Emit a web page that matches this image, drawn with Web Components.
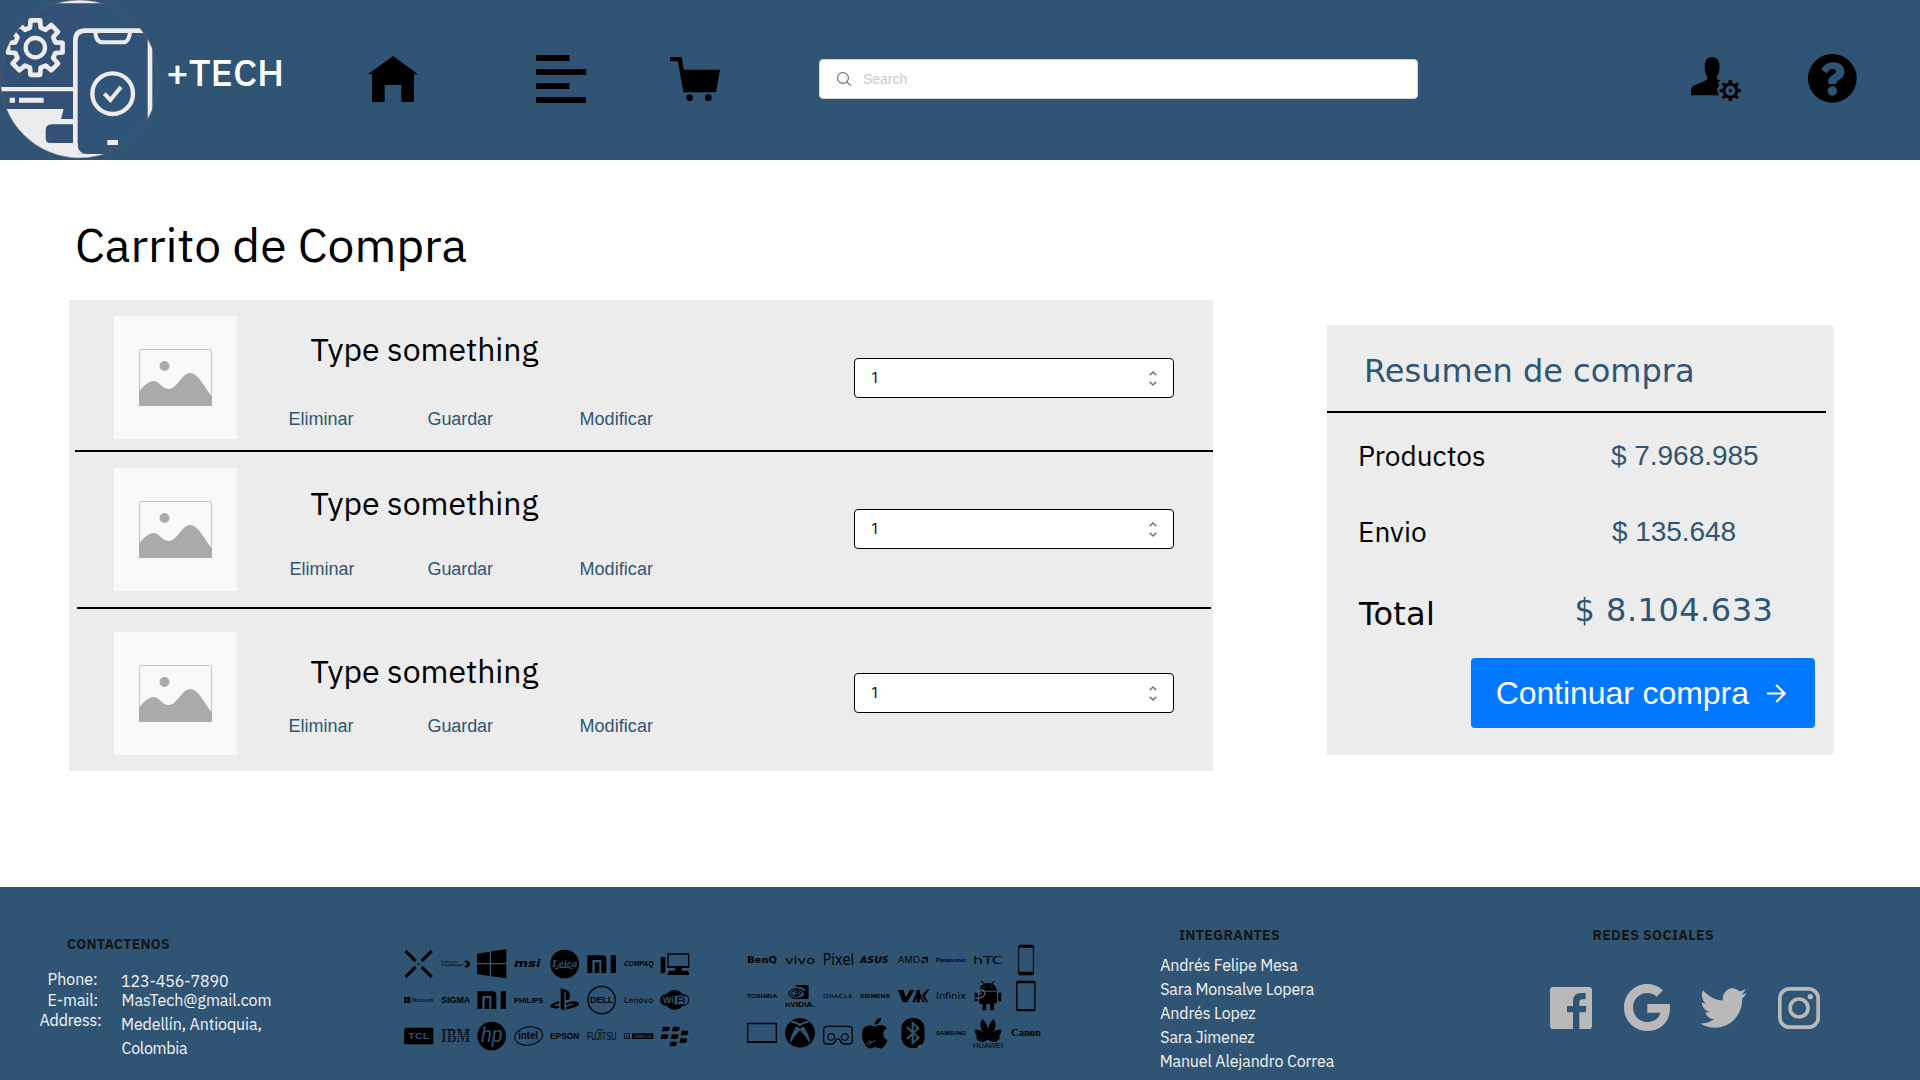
<!DOCTYPE html>
<html lang="es">
<head>
<meta charset="utf-8">
<title>+TECH - Carrito de Compra</title>
<style>
html,body{margin:0;padding:0;background:#fff}
body{width:1920px;height:1080px;overflow:hidden}
</style>
</head>
<body>
<shop-page></shop-page>
<script>
const PLEX = '"IBM Plex Sans","Noto Sans",sans-serif';
const FONTS = { plex: PLEX, arial: '"Liberation Sans",Arial,sans-serif', verdana: 'Verdana,"DejaVu Sans",sans-serif', inter: 'Inter,sans-serif' };
const ctx = document.createElement('canvas').getContext('2d');

/* One line of text whose box ends on the baseline and whose ink fills the width "w". */
class FitText extends HTMLElement {
  connectedCallback() {
    const g = (n, d) => this.getAttribute(n) || d;
    const size = +g('size', 16), w = +g('w', 0), font = FONTS[g('font', 'plex')], weight = g('weight', '400');
    const text = this.textContent;
    ctx.font = `${weight} ${size}px ${font}`;
    const m = ctx.measureText(text);
    const ink = m.actualBoundingBoxRight + m.actualBoundingBoxLeft;
    const ls = w && text.length > 1 ? (w - ink) / (text.length - 1) : 0;
    const root = this.attachShadow({ mode: 'open' });
    root.innerHTML = `<style>
      :host{display:block;flex:none;width:${w || Math.ceil(ink)}px;height:${size}px;line-height:0;white-space:nowrap;
        font:${weight} ${size}px/0 ${font};color:${g('color', '#000')}}
      i{display:inline-block;width:0;height:${size}px}
      span{margin-left:${m.actualBoundingBoxLeft}px;letter-spacing:${ls}px}
    </style><i></i><span><slot></slot></span>`;
  }
}

const ICONS = {
  home: ['0 0 150 138', '<path d="M75 0 150 55H138V138H100V87H50V138H12V55H0Z"/>'],
  menu: ['0 0 150 144', '<path d="M0 0H100V18H0ZM0 42H150V60H0ZM0 84H100V102H0ZM0 126H150V144H0Z"/>'],
  cart: ['0 0 150 132', '<path d="M0 0H35L41 38H150L138 106H40L24 13H0Z"/><circle cx="59" cy="122" r="10"/><circle cx="115" cy="122" r="10"/>'],
  user: ['0 0 150 132', '<path d="M0 115V98Q1 90 10 85L41 72Q50 68 50 62Q41 48 41 28C41 9 50 0 63 0S86 9 86 28Q86 48 77 60Q77 66 81 68L89 71 80 77 85 85 78 96 84 115Z"/><g transform="translate(118 101)"><path d="M-5-32H5V-24L13-20 19-26 26-19 20-13 24-5H32V5H24L20 13 26 19 19 26 13 20 5 24V32H-5V24L-13 20-19 26-26 19-20 13-24 5H-32V-5H-24L-20-13-26-19-19-26-13-20-5-24Z"/><circle r="15" fill="#305574"/><circle r="5"/></g>'],
  help: ['0 0 146 146', '<circle cx="73" cy="73" r="73"/><path d="M40 47C47 34 58 25 76 25C96 25 109 36 109 53C109 68 100 73 93 78C86 82 86 84 86 90H61V82C61 70 69 66 75 62C81 58 84 57 84 52C84 47 80 45 74 45C66 45 63 50 56 58Z" fill="#305574"/><circle cx="73" cy="111" r="14" fill="#305574"/>'],
  search: ['0 0 14 14', '<g fill="none" stroke="#6b7075" stroke-width="1.15"><ellipse cx="6" cy="6" rx="5.4" ry="5.4"/><path d="M9.8 9.8 13.7 13.7"/></g>'],
  spin: ['0 0 8 15', '<path d="M.7 4.2 4 1 7.3 4.2M.7 10.8 4 14 7.3 10.8" fill="none" stroke="#686c70" stroke-width="1.4"/>'],
  arrow: ['0 0 19 19', '<path d="M0 9.5H17.5M9.2 1 17.7 9.5 9.2 18" fill="none" stroke="#fff" stroke-width="2.2"/>'],
  picture: ['0 0 73 57', '<rect x=".5" y=".5" width="72" height="56" rx="1" fill="none" stroke="#c4c4c4"/><ellipse cx="25.5" cy="17" rx="5" ry="5"/><path d="M0 43C5 36 10 32 15 32C20 32 23 40 30 40C38 40 43 24 51 24C58 24 62 32 73 48V57H0Z"/>'],
  facebook: ['0 0 126 126', '<path fill-rule="evenodd" d="M10 0H116Q126 0 126 10V116Q126 126 116 126H88V76H107L109 57H88V46Q88 37 98 37H107V18H94Q69 18 69 43V57H51V76H69V126H10Q0 126 0 116V10Q0 0 10 0Z"/>'],
  google: ['0 0 138 141', '<path d="M70 60H137Q138 66 138 72C138 113 110 141 70 141C31 141 0 110 0 70.500C0 31 31 0 70 0C89 0 104 7 117 19L98 38Q87 27 70 27C46 27 27 46 27 70.500C27 95 46 114 70 114C92 114 106 102 109 86H70Z"/>'],
  twitter: ['0 2.100 24 19.800', '<path d="M23.953 4.570a10 10 0 01-2.825.775 4.958 4.958 0 002.163-2.723c-.951.555-2.005.959-3.127 1.184a4.920 4.920 0 00-8.384 4.482C7.690 8.095 4.067 6.130 1.640 3.162a4.822 4.822 0 00-.666 2.475c0 1.710.870 3.213 2.188 4.096a4.904 4.904 0 01-2.228-.616v.060a4.923 4.923 0 003.946 4.827 4.996 4.996 0 01-2.212.085 4.936 4.936 0 004.604 3.417 9.867 9.867 0 01-6.102 2.105c-.390 0-.779-.023-1.170-.067a13.995 13.995 0 007.557 2.209c9.053 0 13.998-7.496 13.998-13.985 0-.210 0-.420-.015-.630A9.935 9.935 0 0024 4.590z"/>'],
  instagram: ['0 0 126 126', '<g fill="none" stroke="#b9b9b9"><rect x="5.500" y="5.500" width="115" height="115" rx="29" stroke-width="11"/><circle cx="63" cy="63" r="27" stroke-width="11"/></g><circle cx="97" cy="29" r="8"/>']
};
class UiIcon extends HTMLElement {
  connectedCallback() {
    const [vb, body] = ICONS[this.getAttribute('name')];
    this.attachShadow({ mode: 'open' }).innerHTML = `<style>:host{display:block;flex:none;fill:currentColor}svg{display:block;width:100%;height:100%}</style>
      <svg viewBox="${vb}" preserveAspectRatio="none">${body}</svg>`;
  }
}

class TechLogo extends HTMLElement {
  connectedCallback() {
    let gear = '';
    for (let i = 0; i < 8; i++) {
      const p = (r, a) => { const t = (i * 45 + a) * Math.PI / 180; return `${(106 + r * Math.sin(t)).toFixed(1)} ${(143 - r * Math.cos(t)).toFixed(1)}`; };
      gear += `${i ? 'L' : 'M'}${p(62, -15)}L${p(83, -10)}L${p(83, 10)}L${p(62, 15)}`;
    }
    this.attachShadow({ mode: 'open' }).innerHTML = `<style>:host{display:block;flex:none;width:159px;height:158px}svg{display:block}</style>
    <svg width="159" height="158" viewBox="0 0 477 474">
      <defs><clipPath id="c"><ellipse cx="238.500" cy="237" rx="237" ry="237"/></clipPath></defs>
      <g clip-path="url(#c)">
        <path fill="#335076" d="M0 0H477V474H0Z"/>
        <path fill="#305478" d="M240 102H440V460H240Z"/><path fill="#305476" d="M250 12H477V84H250Z"/>
        <path fill="#305574" d="M457 84H477V474H457Z"/>
        <path fill="#ececee" d="M0 0H477V10H0ZM0 261H225V274H0ZM29 293H45V308H29ZM57 293H131V308H57ZM0 327H191L183 357H225V373H155Q137 373 137 392V415Q137 429 150 429H225V474H0ZM225 462H477V474H225ZM322 420H354V435H322Z"/>
        <path d="M226 474V122Q226 92 256 92H430Q450 92 450 115V474" fill="none" stroke="#ececee" stroke-width="14"/>
        <path d="M233 430Q233 461 258 461H225V430Z" fill="#ececee"/>
        <path d="M286 92Q286 127 309 127H371Q386 127 391 92" fill="none" stroke="#ececee" stroke-width="12"/>
        <circle cx="338" cy="281" r="61" fill="none" stroke="#ececee" stroke-width="13"/>
        <path d="M313 281 331 300 363 261" fill="none" stroke="#ececee" stroke-width="12"/>
        <path d="${gear}Z" fill="none" stroke="#ececee" stroke-width="14" stroke-linejoin="round"/>
        <circle cx="106" cy="143" r="29" fill="none" stroke="#ececee" stroke-width="13"/>
      </g>
      <circle cx="238.500" cy="237" r="236.500" fill="none" stroke="#7d5968" stroke-width="1.200"/>
    </svg>`;
  }
}

class SiteHeader extends HTMLElement {
  connectedCallback() {
    this.attachShadow({ mode: 'open' }).innerHTML = `<style>
      :host{display:flex;align-items:flex-start;height:160px;background:#305574;color:#000;box-sizing:border-box}
      .box{flex:none;display:flex;box-sizing:border-box;width:599px;height:40px;margin:59px 0 0 99px;padding-left:17px;background:#fff;border:1px solid #cdd3d7;border-radius:4px}
    </style>
    <tech-logo></tech-logo>
    <fit-text size="38" weight="500" color="#fff" w="113" style="margin:48px 0 0 9px">+TECH</fit-text>
    <ui-icon name="home" style="width:50px;height:46px;margin:56px 0 0 87px"></ui-icon>
    <ui-icon name="menu" style="width:50px;height:48px;margin:55px 0 0 118px"></ui-icon>
    <ui-icon name="cart" style="width:50px;height:44px;margin:57px 0 0 84px"></ui-icon>
    <div class="box">
      <ui-icon name="search" style="width:14px;height:14px;margin-top:12px"></ui-icon>
      <fit-text font="arial" size="14" w="43.500" color="#c4cbcd" style="margin:10px 0 0 12px">Search</fit-text>
    </div>
    <ui-icon name="user" style="width:50px;height:44px;margin:57px 0 0 273px"></ui-icon>
    <ui-icon name="help" style="width:48.700px;height:48.700px;margin:54.300px 0 0 67px"></ui-icon>`;
  }
}

class QtyField extends HTMLElement {
  connectedCallback() {
    this.attachShadow({ mode: 'open' }).innerHTML = `<style>
      :host{display:flex;flex:none;justify-content:space-between;box-sizing:border-box;width:320px;height:40px;background:#fff;border:1px solid #000;border-radius:4px;padding:0 16px 0 16.500px}
    </style><fit-text font="inter" size="15" color="#161616" style="margin-top:9px">1</fit-text>
    <ui-icon name="spin" style="width:8px;height:15px;margin-top:12px"></ui-icon>`;
  }
}

/* Attributes: head, link and qty give the space above each part, indent the start of the links. */
class CartItem extends HTMLElement {
  connectedCallback() {
    const g = n => this.getAttribute(n);
    this.attachShadow({ mode: 'open' }).innerHTML = `<style>
      :host{display:flex;align-items:flex-start;box-sizing:border-box}
      .pic{flex:none;display:flex;justify-content:center;box-sizing:border-box;width:123px;height:123px;padding-top:33px;margin-left:45px;background:#f9f9f9;color:#aaa}
      .info{flex:none;width:617px}
      .links{display:flex;margin:${g('link')}px 0 0 ${g('indent')}px}
    </style>
    <div class="pic"><ui-icon name="picture" style="width:73px;height:57px"></ui-icon></div>
    <div class="info">
      <fit-text size="32" w="228" style="margin:${g('head')}px 0 0 73.500px">Type something</fit-text>
      <div class="links">
        <fit-text font="arial" size="18" w="64" color="#305574">Eliminar</fit-text>
        <fit-text font="arial" size="18" w="65.500" color="#305574" style="margin-left:${126.5 - g('indent')}px">Guardar</fit-text>
        <fit-text font="arial" size="18" w="72.500" color="#305574" style="margin-left:87.500px">Modificar</fit-text>
      </div>
    </div>
    <qty-field style="margin-top:${g('qty')}px"></qty-field>`;
  }
}

class CartList extends HTMLElement {
  connectedCallback() {
    this.attachShadow({ mode: 'open' }).innerHTML = `<style>
      :host{display:flex;flex-direction:column;flex:none;box-sizing:border-box;width:1144px;height:471px;background:#ececec;margin-top:38px}
      cart-item{flex:none}
      hr{flex:none;border:0;margin:0;height:2px;background:#000}
    </style>
    <cart-item style="height:150px;padding-top:16px" head="13" link="46" indent="52.500" qty="42"></cart-item>
    <hr style="margin-left:6px">
    <cart-item style="height:155px;padding-top:16px" head="15" link="42" indent="53.500" qty="41"></cart-item>
    <hr style="margin:0 2px 0 8px">
    <cart-item style="height:162px;padding-top:23px" head="19" link="31" indent="52.500" qty="41"></cart-item>`;
  }
}

class OrderSummary extends HTMLElement {
  connectedCallback() {
    this.attachShadow({ mode: 'open' }).innerHTML = `<style>
      :host{display:flex;flex-direction:column;flex:none;box-sizing:border-box;width:507px;height:430px;background:#ececec}
      hr{flex:none;border:0;margin:29px 8px 0 0;height:2px;background:#000}
      .row{display:flex;align-items:flex-start;padding-left:33px}
      button{flex:none;display:flex;box-sizing:border-box;width:344px;height:70px;margin:33px 0 0 144px;padding:0 0 0 25.500px;border:0;border-radius:4px;background:#0078ff}
    </style>
    <fit-text font="verdana" size="32" w="325" color="#305574" style="margin:25px 0 0 40px">Resumen de compra</fit-text>
    <hr>
    <div class="row" style="padding-top:24px">
      <fit-text size="28" w="125" style="margin-top:1px">Productos</fit-text>
      <fit-text font="arial" size="28" w="147" color="#305574" style="margin-left:126px">$ 7.968.985</fit-text>
    </div>
    <div class="row" style="padding-top:47px">
      <fit-text size="28" w="66" style="margin-top:1px">Envio</fit-text>
      <fit-text font="arial" size="28" w="123.500" color="#305574" style="margin-left:186px">$ 135.648</fit-text>
    </div>
    <div class="row" style="padding-top:47px;padding-left:31px">
      <fit-text font="verdana" size="32" w="74" style="margin-top:4px">Total</fit-text>
      <fit-text font="verdana" size="32" w="194" color="#305574" style="margin-left:144.500px">$ 8.104.633</fit-text>
    </div>
    <button>
      <fit-text font="arial" size="32" w="252.500" color="#fff" style="margin-top:14px">Continuar compra</fit-text>
      <ui-icon name="arrow" style="width:19px;height:19px;margin:25.500px 0 0 17.500px"></ui-icon>
    </button>`;
  }
}

/* Brand marks: drawn on an 88 x 96 field, centred at (44,48). */
const word = (t, size, y, o = {}) => `<text x="${o.x ?? 0}" y="${y}" font-size="${size}" font-family="${o.f || 'Liberation Sans'}" font-weight="${o.b || 700}" ${o.i ? 'font-style="italic"' : ''} fill="${o.c || '#000'}" textLength="${o.w || 88}" lengthAdjust="spacingAndGlyphs">${t}</text>`;
const B = '#305574';
const mi = '<path d="M1 22H47Q58 22 58 34V75H43V36H16V75H1ZM23 43H37V75H23ZM71 22H87V75H71Z"/>';
const blackberry = [[6,20],[36,20],[2,43],[32,43],[62,32],[58,55],[28,65]].map(([x, y]) => `<path d="M${x + 3} ${y}H${x + 18}Q${x + 25} ${y} ${x + 23} ${y + 7}Q${x + 21} ${y + 14} ${x + 14} ${y + 14}H${x}Z"/>`).join('');
const petals = [[-82, 36], [-56, 49], [-18, 64], [18, 64], [56, 49], [82, 36]].map(([a, h]) => `<path transform="translate(44 68) rotate(${a})" d="M0 0C-12-${h * .35}-14-${h * .8} ${a < 0 ? 3 : -3}-${h}C14-${h * .8} 12-${h * .35} 0 0Z"/>`).join('');
const SET_A = [
  '<path d="M8 5 38 36 31 42 1 12ZM80 5 50 36 57 42 87 12ZM8 91 38 60 31 54 1 84ZM80 91 50 60 57 54 87 84Z"/><path d="M39 47H49V50H39Z"/>',
  word('Qualcomm', 11, 46, { w: 50, b: 400 }) + word('snapdragon', 12, 55, { w: 68, b: 400 }) + '<path d="M68 41Q72 37 79 38Q87 41 87 48Q86 59 75 59Q71 58 70 55Q78 52 78 46Q75 41 68 41Z"/>',
  '<path d="M0 17 38 11V45H0ZM42 10 88 4V45H42ZM0 49H38V84L0 79ZM42 49H88V91L42 85Z"/>',
  word('msi', 34, 57, { i: 1, w: 80, f: 'DejaVu Sans' }),
  '<circle cx="44" cy="48" r="43"/>' + word('Leica', 34, 56, { i: 1, w: 76, x: 6, f: 'Liberation Serif', c: B }) + `<path d="M15 62Q45 54 68 62" fill="none" stroke="${B}" stroke-width="3"/>`,
  mi,
  word('COMPAQ', 20, 54, { i: 1 }),
  '<rect x="2" y="27" width="14" height="49" rx="3"/><path fill-rule="evenodd" d="M22 16H88V60H22ZM26 20V54H84V20Z"/><path d="M45 60H65V68H84L88 81H22L27 68H45Z"/>',
  '<path d="M0 39H8V47H0ZM10 39H19V47H10ZM0 49H8V57H0ZM10 49H19V57H10Z"/>' + word('Microsoft', 15, 53, { x: 23, w: 65, b: 400 }),
  word('SIGMA', 26, 57),
  mi,
  word('PHILIPS', 23, 56),
  '<path d="M32 13 50 18Q60 22 60 36Q60 52 47 47V24L43 23V80L32 75ZM27 51V59L12 64Q14 68 27 65V72Q8 76 1 68Q0 61 12 56ZM48 57 66 52Q84 51 87 59Q87 65 78 68L48 77V69L72 61Q70 58 62 60L48 64Z"/>',
  '<circle cx="44" cy="48" r="41" fill="none" stroke="#000" stroke-width="4"/>' + word('DELL', 28, 58, { x: 9, w: 70 }),
  word('Lenovo', 24, 57, { b: 400, f: 'DejaVu Sans' }),
  '<ellipse cx="44" cy="48" rx="30" ry="30"/><rect x="0" y="31" width="88" height="34" rx="17"/>' + word('Wi', 27, 58, { x: 9, w: 32, c: B }) + `<path d="M45 35H73Q84 35 84 47Q84 61 72 61H43Z" fill="${B}"/>` + word('Fi', 27, 57, { x: 50, w: 26 }),
  '<path d="M5 23H88V73H0V32Z"/>' + word('TCL', 25, 57, { x: 13, w: 63, c: B }),
  word('IBM', 54, 66, { f: 'Liberation Serif' }) + `<path d="M0 35.500H88M0 41H88M0 46.500H88M0 52H88M0 57.500H88M0 63H88" stroke="${B}" stroke-width="2"/>`,
  '<circle cx="44" cy="48" r="43"/>' + word('hp', 68, 65, { x: 12, w: 64, i: 1, b: 400, c: B }),
  '<ellipse cx="44" cy="48" rx="42" ry="27" fill="none" stroke="#000" stroke-width="3" transform="rotate(-8 44 48)"/>' + word('intel', 32, 57, { x: 13, w: 59 }),
  word('EPSON', 26, 57),
  word('FUJITSU', 34, 61, { b: 400 }) + '<path d="M31 36C29 28 36 25 39 31C42 26 48 29 45 35" fill="none" stroke="#000" stroke-width="2"/>',
  '<path fill-rule="evenodd" d="M0 40H18V57H0ZM2 42V55H16V42Z"/><path d="M24 40H88V57H24Z"/>' + word('R', 13, 54, { x: 5, w: 8, b: 400 }) + word('ONEPLUS', 12, 53, { x: 29, w: 54, c: B }),
  blackberry
];
const SET_B = [
  word('BenQ', 28, 57, { f: 'DejaVu Sans' }),
  word('vivo', 32, 59, { b: 400, f: 'DejaVu Sans' }),
  word('Pixel', 47, 64, { b: 400, x: -1, w: 92, f: 'Open Sans' }),
  word('ASUS', 24, 56, { i: 1, w: 84, f: 'DejaVu Sans' }),
  word('AMD', 28, 57, { w: 65, b: 400, f: 'Open Sans' }) + '<path d="M69 39H88V58L82 52V45H75ZM69 47V58H80L76 52H74Z"/>',
  word('Panasonic', 17, 53),
  word('hTC', 34, 60, { b: 400, f: 'DejaVu Sans' }),
  '<path fill-rule="evenodd" d="M26 2H62Q67 2 67 7V89Q67 94 62 94H26Q21 94 21 89V7Q21 2 26 2ZM24 11V83H64V11Z"/>',
  word('TOSHIBA', 18, 54),
  '<path d="M31 15H69V57H31V53Q49 54 57 43Q46 27 31 29V25Q46 23 54 34L60 31Q50 18 31 20Z"/><path d="M31 25C19 28 10 37 10 40Q17 55 31 56M31 31Q22 34 18 39Q23 50 31 50Q43 47 48 40Q40 31 31 31ZM31 37Q36 34 40 40Q37 46 31 46Z" fill="none" stroke="#000" stroke-width="3"/>' + word('nVIDIA.', 22, 81),
  word('ORACLE', 16, 54, { b: 400, f: 'DejaVu Sans' }),
  word('SIEMENS', 18, 54),
  '<path d="M0 30H16L23 52 35 30H48L27 67H14ZM42 67 57 30H64V67H55V55L49 67ZM57 29 83 67H73L52 34ZM87 28 67 49 78 67H89L78 48 92 29Z"/>',
  word('Infinix', 24, 57, { b: 400, f: 'DejaVu Sans' }),
  `<path d="M18 32Q21 9 44 9Q67 9 70 32ZM18 35H70V70H62V91H50V72H39V91H28V72H18ZM5 38H14V64H5ZM74 38H83V64H74ZM29 11 23 3 26 2 33 10ZM58 11 64 3 61 2 54 10Z"/><path d="M7 55Q35 55 35 38Q30 23 17 32Q12 38 18 43Q27 41 22 37" stroke="#66717a" stroke-width="3" fill="none"/><path d="M30 22H35M52 22H57" stroke="${B}" stroke-width="3"/>`,
  '<path fill-rule="evenodd" d="M20 2H68Q72 2 72 7V89Q72 94 68 94H20Q15 94 15 89V7Q15 2 20 2ZM19 10V87H68V10Z"/>',
  '<path fill-rule="evenodd" d="M3 17H85Q88 17 88 20V78H0V20Q0 17 3 17ZM4 22V72H84V22Z"/>',
  `<circle cx="44" cy="48" r="44"/><path d="M15 13Q29 9 44 20Q59 9 73 13L65 18Q55 19 44 28Q33 19 22 18Z" fill="${B}"/><path d="M34 28Q16 53 14 80Q29 55 44 40Q59 55 74 80Q72 53 54 28L44 35Z" fill="${B}"/>`,
  '<path d="M12 28H76Q86 28 86 38V71Q86 81 75 81H62Q56 81 52 73Q44 57 36 73Q32 81 26 81H12Q2 81 2 71V38Q2 28 12 28Z" fill="none" stroke="#000" stroke-width="4"/><g fill="none" stroke="#000" stroke-width="3"><circle cx="24" cy="60" r="10"/><circle cx="64" cy="60" r="10"/></g>',
  '<path transform="translate(-3 2) scale(3.850)" d="M12.152 6.896c-.948 0-2.415-1.078-3.960-1.040-2.040.027-3.910 1.183-4.961 3.014-2.117 3.675-.546 9.103 1.519 12.090 1.013 1.454 2.208 3.090 3.792 3.039 1.520-.065 2.090-.987 3.935-.987 1.831 0 2.350.987 3.960.948 1.637-.026 2.676-1.480 3.676-2.948 1.156-1.688 1.636-3.325 1.662-3.415-.039-.013-3.182-1.221-3.220-4.857-.026-3.040 2.480-4.494 2.597-4.559-1.429-2.090-3.623-2.324-4.390-2.376-2-.156-3.675 1.090-4.610 1.090zM15.530 3.830c.843-1.012 1.400-2.427 1.245-3.830-1.207.052-2.662.805-3.532 1.818-.780.896-1.454 2.338-1.273 3.714 1.338.104 2.715-.688 3.559-1.701"/><path d="M20 84Q28 67 31 72T27 83Q35 71 38 75Q42 68 47 69" fill="none" stroke="#66717a" stroke-width="2"/>',
  `<rect x="10" y="3" width="68" height="90" rx="32"/><path d="M26 30 60 62 43 78V18L60 34 26 66" fill="none" stroke="${B}" stroke-width="6"/><path d="M57 90Q62 84 71 84L65 91Z" fill="#77797b"/>`,
  word('SAMSUNG', 16, 54),
  petals + word('HUAWEI', 20, 92, { b: 400 }),
  word('Canon', 31, 57, { f: 'Liberation Serif' })
];
class BrandWall extends HTMLElement {
  connectedCallback() {
    const b = this.getAttribute('set') === 'b';
    const set = b ? SET_B : SET_A, px = b ? 37.67 : 36.62, py = b ? 36.5 : 35.67, w = b ? 30 : 29.333;
    this.attachShadow({ mode: 'open' }).innerHTML = `<style>
      :host{display:grid;flex:none;grid-template-columns:repeat(8,${px}px);grid-auto-rows:${py}px;width:${px * 8}px}
      svg{display:block;width:${w}px;height:32px;overflow:visible}
    </style>` + set.map(s => `<svg viewBox="0 0 88 96" preserveAspectRatio="none">${s}</svg>`).join('');
  }
}

class SiteFooter extends HTMLElement {
  connectedCallback() {
    const t = (s, w, m) => `<fit-text size="16" w="${w}" color="#f4f4f4" style="margin:${m}">${s}</fit-text>`;
    const h = (s, w, m) => `<fit-text size="14" weight="700" w="${w}" color="#161616" style="margin:${m}">${s}</fit-text>`;
    this.attachShadow({ mode: 'open' }).innerHTML = `<style>
      :host{display:flex;align-items:flex-start;box-sizing:border-box;height:193px;background:#305574;overflow:hidden}
      .contact{flex:none;width:404px}
      .cols,.social{display:flex;align-items:flex-start}
      .keys{flex:none;width:82px;padding-left:39px}
      .team{flex:none;width:390px}
      .social{color:#b9b9b9}
    </style>
    <div class="contact">
      ${h('CONTACTENOS', 103, '48px 0 0 67px')}
      <div class="cols">
        <div class="keys">
          ${t('Phone:', 48.5, '20px 0 0 9.5px')}${t('E-mail:', 49, '5px 0 0 9.5px')}${t('Address:', 61.5, '4px 0 0 .5px')}
        </div>
        <div>
          ${t('123-456-7890', 107, '22px 0 0 0')}${t('MasTech@gmail.com', 148, '3px 0 0 1.5px')}${t('Medellín, Antioquia,', 139.5, '8px 0 0 1px')}${t('Colombia', 66.5, '8px 0 0 .5px')}
        </div>
      </div>
    </div>
    <brand-wall set="a" style="margin-top:61.300px"></brand-wall>
    <brand-wall set="b" style="margin:56.500px 0 0 50.300px"></brand-wall>
    <div class="team" style="margin-left:${(1160 - 747.3 - 37.67 * 8).toFixed(2)}px">
      ${h('INTEGRANTES', 101, '39px 0 0 19px')}
      ${t('Andrés Felipe Mesa', 138, '15px 0 0 .3px')}${t('Sara Monsalve Lopera', 154.5, '8px 0 0 .3px')}${t('Andrés Lopez', 95, '8px 0 0 .3px')}${t('Sara Jimenez', 94, '8px 0 0 .3px')}${t('Manuel Alejandro Correa', 174, '8px 0 0 .7px')}
    </div>
    <div>
      ${h('REDES SOCIALES', 120.5, '39px 0 0 43.5px')}
      <div class="social" style="padding-top:44px">
        <ui-icon name="facebook" style="width:42px;height:42px;margin-top:3px"></ui-icon>
        <ui-icon name="google" style="width:46px;height:47px;margin:0 0 0 32px"></ui-icon>
        <ui-icon name="twitter" style="width:47px;height:40px;margin:4px 0 0 30.500px"></ui-icon>
        <ui-icon name="instagram" style="width:42px;height:42px;margin:3px 0 0 30.500px"></ui-icon>
      </div>
    </div>`;
  }
}

class ShopPage extends HTMLElement {
  connectedCallback() {
    this.attachShadow({ mode: 'open' }).innerHTML = `<style>
      :host{display:flex;flex-direction:column;width:1920px;height:1080px;background:#fff}
      main{flex:1;display:flex;align-items:flex-start;padding-left:69px}
      site-header,site-footer{flex:none}
    </style>
    <site-header></site-header>
    <main>
      <div><fit-text size="48" w="389.500" style="margin:54px 0 0 8px">Carrito de Compra</fit-text><cart-list></cart-list></div>
      <order-summary style="margin:165px 0 0 114px"></order-summary>
    </main>
    <site-footer></site-footer>`;
  }
}
for (const [n, c] of Object.entries({ 'fit-text': FitText, 'ui-icon': UiIcon, 'tech-logo': TechLogo, 'site-header': SiteHeader, 'qty-field': QtyField, 'cart-item': CartItem, 'cart-list': CartList, 'order-summary': OrderSummary, 'brand-wall': BrandWall, 'site-footer': SiteFooter, 'shop-page': ShopPage })) customElements.define(n, c);
</script>
</body>
</html>
